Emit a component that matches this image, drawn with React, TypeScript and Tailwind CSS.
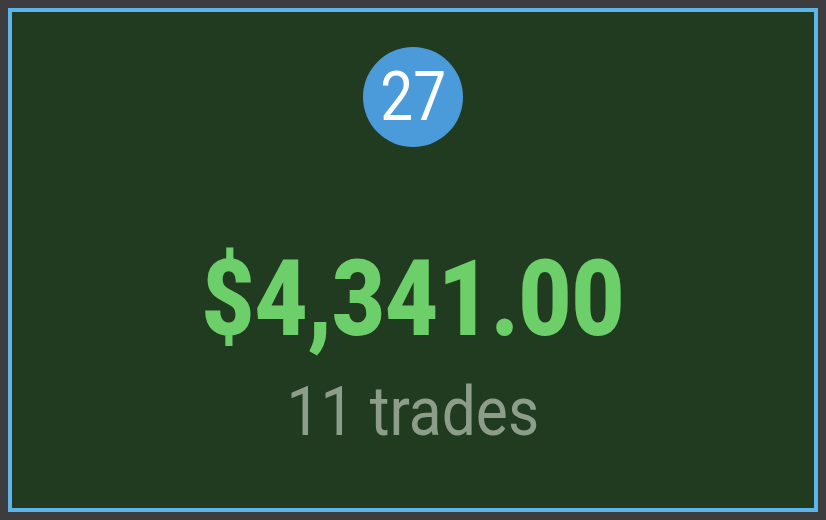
import React from 'react';

const DayCell: React.FC = () => {
  const day = 27;
  const total = '$4,341.00';
  const trades = 11;

  return (
    <div className="h-screen w-full bg-[#3d3d3f] p-2 font-['Roboto',sans-serif]">
      <div className="flex h-full flex-col items-center border-4 border-[#5cb5ea] bg-[#213b20]">
        {/* Day badge */}
        <div className="mt-[35px] flex h-[100px] w-[100px] items-center justify-center rounded-full bg-[#4b9bdb]">
          <span className="inline-block origin-center scale-x-[0.86] text-[68px] leading-none text-white">{day}</span>
        </div>

        {/* Day total */}
        <div className="mt-[100px] inline-block origin-center scale-x-[0.87] text-[105px] font-black leading-none text-[#6dcf6a]">
          {total}
        </div>
        <div className="mt-[26px] inline-block origin-center scale-x-[0.89] text-[68px] leading-none text-[#8c9e89]">
          {trades} trades
        </div>
      </div>
    </div>
  );
};

export default function App() {
  return <DayCell />;
}
